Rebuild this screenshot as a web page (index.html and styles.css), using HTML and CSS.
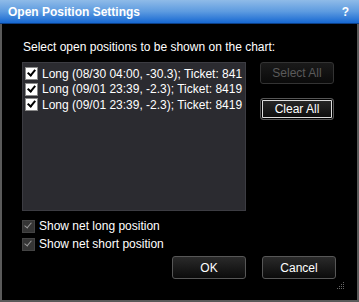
FILE: index.html
```html
<!DOCTYPE html>
<html>
<head>
    <meta charset="utf-8" />
    <title>Open Position Settings</title>
    <link rel="stylesheet" href="styles.css">
</head>
<body>
<div class="dialog">
    <div class="titlebar">
        <span class="title">Open Position Settings</span>
        <span class="help">?</span>
    </div>
    <div class="content">
        <p class="prompt">Select open positions to be shown on the chart:</p>
        <div class="top">
            <ul class="list">
                <li><span class="check on"></span>Long (08/30 04:00, -30.3); Ticket: 841</li>
                <li><span class="check on"></span>Long (09/01 23:39, -2.3); Ticket: 8419</li>
                <li><span class="check on"></span>Long (09/01 23:39, -2.3); Ticket: 8419</li>
            </ul>
            <div class="side">
                <button class="btn" disabled>Select All</button>
                <button class="btn focus">Clear All</button>
            </div>
        </div>
        <div class="options">
            <label class="opt"><span class="check dim"></span>Show net long position</label>
            <label class="opt"><span class="check dim"></span>Show net short position</label>
        </div>
        <div class="actions">
            <button class="btn">OK</button>
            <button class="btn">Cancel</button>
        </div>
    </div>
    <svg class="grip" width="9" height="9" viewBox="0 0 9 9">
        <rect x="7" y="1" width="1" height="1" fill="#666"/>
        <rect x="5" y="3" width="1" height="1" fill="#666"/>
        <rect x="7" y="3" width="1" height="1" fill="#666"/>
        <rect x="3" y="5" width="1" height="1" fill="#666"/>
        <rect x="5" y="5" width="1" height="1" fill="#666"/>
        <rect x="7" y="5" width="1" height="1" fill="#666"/>
        <rect x="1" y="7" width="1" height="1" fill="#666"/>
        <rect x="3" y="7" width="1" height="1" fill="#666"/>
        <rect x="5" y="7" width="1" height="1" fill="#666"/>
        <rect x="7" y="7" width="1" height="1" fill="#666"/>
    </svg>
</div>
</body>
</html>
```

FILE: styles.css
```css
html, body {
    margin: 0;
    padding: 0;
    background: #000;
}
body {
    font-family: 'Liberation Sans', Arial, sans-serif;
    font-size: 12px;
    color: #fff;
}
.dialog {
    position: relative;
    width: 359px;
    height: 302px;
    box-sizing: border-box;
    border: 2px solid #5a5a5a;
    border-top: 0;
    background: #000;
}
.titlebar {
    display: flex;
    align-items: center;
    justify-content: space-between;
    height: 23px;
    margin: 0 -2px;
    padding: 0 10px 0 8px;
    background: linear-gradient(#8fbbe8, #5d9be0 50%, #1768d2);
    border-bottom: 1px solid #0c3f86;
    font-weight: bold;
}
.help {
    font-size: 12px;
}
.content {
    padding: 0 21px 0 20px;
}
.prompt {
    margin: 16px 0 0 1px;
    line-height: 14px;
}
.top {
    display: flex;
    gap: 14px;
    margin-top: 8px;
}
.list {
    width: 224px;
    height: 149px;
    margin: 0;
    padding: 3px 0 0 2px;
    box-sizing: border-box;
    list-style: none;
    background: #2b2b30;
    border: 1px solid #3c3c42;
    overflow: hidden;
}
.list li {
    display: flex;
    align-items: center;
    height: 15.5px;
    white-space: nowrap;
    font-size: 12px;
}
.check {
    display: inline-block;
    flex: none;
    width: 13px;
    height: 13px;
    box-sizing: border-box;
    margin-right: 4px;
    position: relative;
}
.check.on {
    background: #fff;
    border: 1px solid #8a8a8a;
}
.check.on::after,
.check.dim::after {
    content: "";
    position: absolute;
    left: 3px;
    top: 0px;
    width: 3px;
    height: 6px;
    border: solid #000;
    border-width: 0 2px 2px 0;
    transform: rotate(40deg);
}
.check.dim {
    background: #353535;
    border: 1px solid #444;
}
.check.dim::after {
    border-color: #999;
    border-width: 0 1px 1px 0;
}
.side {
    display: flex;
    flex-direction: column;
    gap: 14px;
}
.btn {
    width: 74px;
    height: 22px;
    padding: 0;
    font-family: inherit;
    font-size: 12px;
    color: #fff;
    background: linear-gradient(#2a2a2a, #0b0b0b);
    border: 1px solid #575757;
    border-radius: 3px;
}
.btn:disabled {
    color: #5a5a5a;
    background: linear-gradient(#1a1a1a, #0a0a0a);
    border-color: #333;
}
.btn.focus {
    box-shadow: inset 0 0 0 1px #000, inset 0 0 0 2px #ddd;
}
.options {
    margin-top: 6px;
}
.opt {
    display: flex;
    align-items: center;
    height: 18px;
}
.actions {
    display: flex;
    justify-content: flex-end;
    gap: 16px;
    margin-top: 3px;
}
.actions .btn {
    height: 23px;
}
.grip {
    position: absolute;
    right: 12px;
    bottom: 10px;
}
```
